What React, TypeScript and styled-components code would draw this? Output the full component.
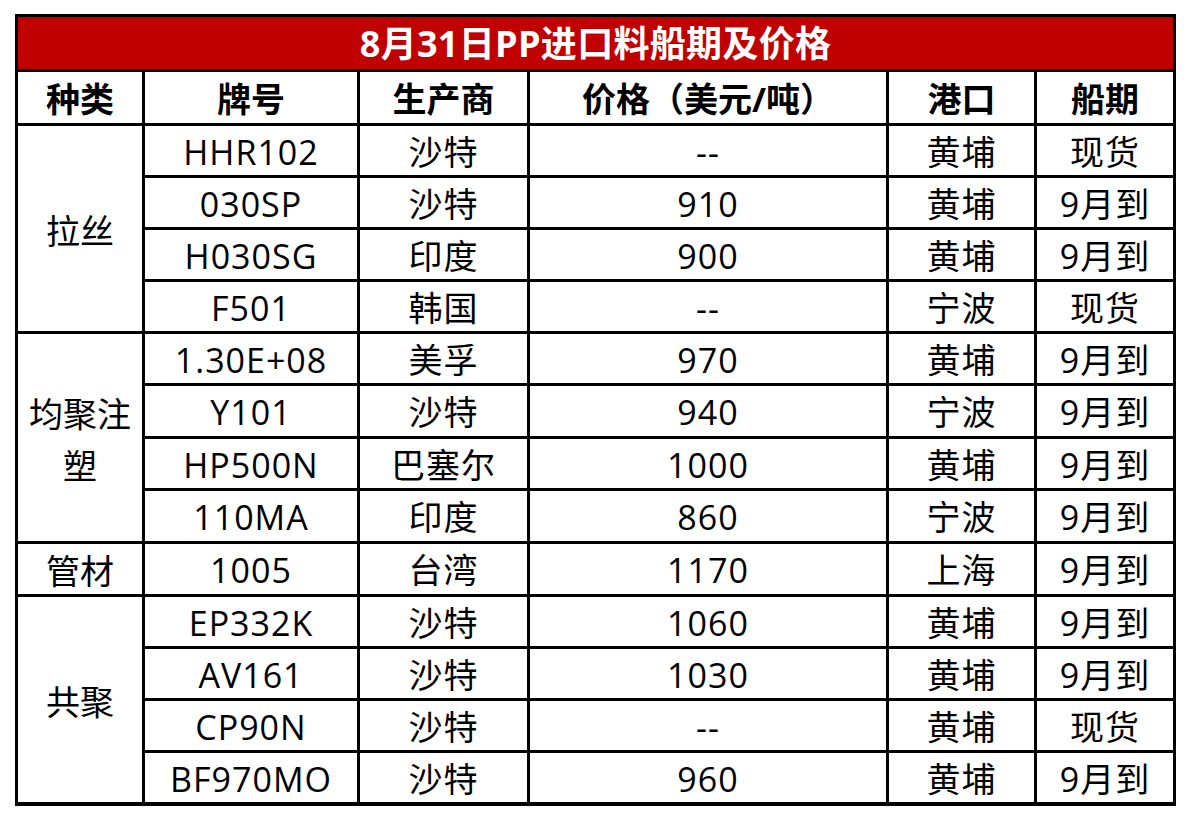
import React from 'react';
import styled, {createGlobalStyle} from 'styled-components';

const GlobalStyle = createGlobalStyle`
  html, body {
    margin: 0;
    padding: 0;
    background: #fff;
  }
  body {
    font-family: "Open Sans", "Noto Sans CJK SC", sans-serif;
    color: #000;
  }
`

const Page = styled.div`
  padding: 14px 0 0 15px;
`

const Sheet = styled.div`
  display: inline-grid;
  grid-template-columns: 124px 212px 167px 356px 145px 136px;
  grid-template-rows: 52px 51px 49px 49px 49px 49px 49px 50px 49px 50px 50px 49px 49px 49px 49px;
  gap: 3px;
  padding: 3px 3px 4px 3px;
  background: #000;
`

const Title = styled.div`
  grid-column: 1 / -1;
  background: #c00000;
  color: #fff;
  font-size: 36px;
  font-weight: 700;
  letter-spacing: 0.3px;
  display: flex;
  align-items: center;
  justify-content: center;
  line-height: 48px;
  padding-top: 1px;
`

const Cell = styled.div<{ $head?: boolean; $span?: number }>`
  background: #fff;
  display: flex;
  align-items: center;
  justify-content: center;
  text-align: center;
  font-size: 34px;
  font-weight: ${p => (p.$head ? 700 : 400)};
  letter-spacing: ${p => (p.$head ? '0' : '1px')};
  line-height: 46px;
  padding-top: 2px;
  white-space: nowrap;
  ${p => (p.$span ? `grid-row: span ${p.$span};` : '')}
`

const Category = styled(Cell)`
  white-space: normal;
  letter-spacing: 0;
  line-height: 52px;
  padding: 4px 10px 0;
`

interface Row {
    brand: string;
    maker: string;
    price: string;
    port: string;
    ship: string;
}

interface Group {
    name: string;
    rows: Row[];
}

const r = (brand: string, maker: string, price: string, port: string, ship: string): Row =>
    ({brand, maker, price, port, ship});

const groups: Group[] = [
    {
        name: '拉丝', rows: [
            r('HHR102', '沙特', '--', '黄埔', '现货'),
            r('030SP', '沙特', '910', '黄埔', '9月到'),
            r('H030SG', '印度', '900', '黄埔', '9月到'),
            r('F501', '韩国', '--', '宁波', '现货'),
        ]
    },
    {
        name: '均聚注塑', rows: [
            r('1.30E+08', '美孚', '970', '黄埔', '9月到'),
            r('Y101', '沙特', '940', '宁波', '9月到'),
            r('HP500N', '巴塞尔', '1000', '黄埔', '9月到'),
            r('110MA', '印度', '860', '宁波', '9月到'),
        ]
    },
    {
        name: '管材', rows: [
            r('1005', '台湾', '1170', '上海', '9月到'),
        ]
    },
    {
        name: '共聚', rows: [
            r('EP332K', '沙特', '1060', '黄埔', '9月到'),
            r('AV161', '沙特', '1030', '黄埔', '9月到'),
            r('CP90N', '沙特', '--', '黄埔', '现货'),
            r('BF970MO', '沙特', '960', '黄埔', '9月到'),
        ]
    },
];

const headers = ['种类', '牌号', '生产商', '价格（美元/吨）', '港口', '船期'];

const App = () => (
    <>
        <GlobalStyle/>
        <Page>
            <Sheet>
                <Title>8月31日PP进口料船期及价格</Title>
                {headers.map(h => <Cell key={h} $head>{h}</Cell>)}
                {groups.map(g => (
                    <React.Fragment key={g.name}>
                        {g.rows.map((row, i) => (
                            <React.Fragment key={row.brand}>
                                {i === 0 && <Category $span={g.rows.length}>{g.name}</Category>}
                                <Cell>{row.brand}</Cell>
                                <Cell>{row.maker}</Cell>
                                <Cell>{row.price}</Cell>
                                <Cell>{row.port}</Cell>
                                <Cell>{row.ship}</Cell>
                            </React.Fragment>
                        ))}
                    </React.Fragment>
                ))}
            </Sheet>
        </Page>
    </>
);

export default App;
